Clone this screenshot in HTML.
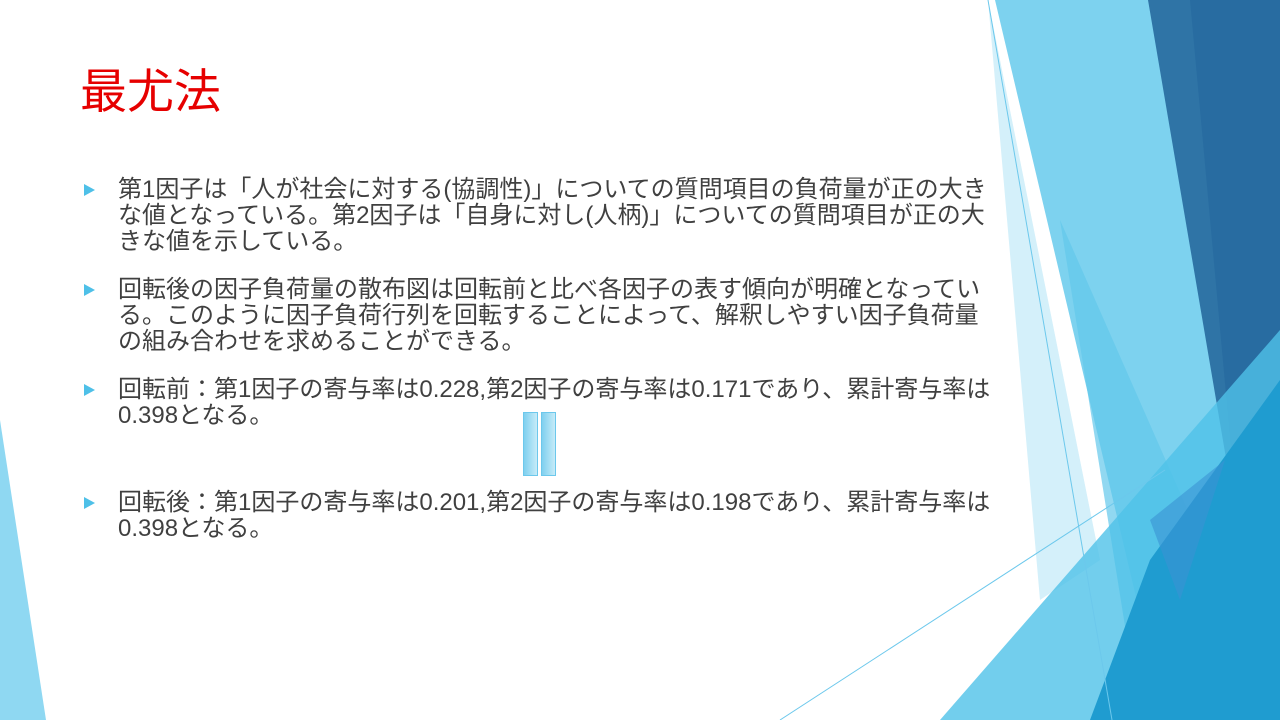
<!DOCTYPE html>
<html><head><meta charset="utf-8"><style>
html,body{margin:0;padding:0}
body{width:1280px;height:720px;position:relative;overflow:hidden;background:#fff;font-family:"Liberation Sans","Noto Sans CJK JP",sans-serif}
svg.bg{position:absolute;left:0;top:0}
h1{position:absolute;left:80px;top:64px;margin:0;font-weight:normal;font-size:47px;color:#e60000;line-height:56px}
.it{position:absolute;left:118px;font-size:24px;line-height:26px;color:#404040;white-space:nowrap}
.b{position:absolute;left:84px;width:0;height:0;border-left:11px solid #4ec0e8;border-top:6.5px solid transparent;border-bottom:6.5px solid transparent}
.bar{position:absolute;top:412px;width:13px;height:62px;background:linear-gradient(90deg,#7fd0ef,#c6ebf8);border:1px solid #6cc8ec}
</style></head><body>
<svg class="bg" width="1280" height="720">
<polygon points="0,420 0,720 46,720" fill="#8fd8f2"/>
<polygon points="995,0 1280,0 1280,720 1165,720" fill="#7dd2ef"/>
<polygon points="988,0 1100,560 1040,600" fill="#d4f0fa"/>
<polygon points="1060,220 1280,720 1140,720" fill="#62c8eb" opacity=".7"/>
<polygon points="1148,0 1280,0 1280,380 1228,470" fill="#2f74a6"/>
<polygon points="1190,0 1280,0 1280,380 1232,460" fill="#276aa0" opacity=".8"/>
<polygon points="940,720 1280,330 1280,720" fill="#4fc2e8" opacity=".8"/>
<polygon points="1150,560 1280,380 1280,720 1090,720" fill="#1f9cd0"/>
<polygon points="1150,520 1225,460 1180,600" fill="#3a92d4" opacity=".6"/>
<line x1="988" y1="0" x2="1112" y2="720" stroke="#6cc8ec" stroke-width="1"/>
<line x1="780" y1="720" x2="1165" y2="470" stroke="#6cc8ec" stroke-width="1"/>
</svg>
<h1>最尤法</h1>
<div class="b" style="top:184px"></div>
<div class="it" style="top:177px">第1因子は「人が社会に対する(協調性)」についての質問項目の負荷量が正の大き<br>な値となっている。第2因子は「自身に対し(人柄)」についての質問項目が正の大<br>きな値を示している。</div>
<div class="b" style="top:284px"></div>
<div class="it" style="top:277px">回転後の因子負荷量の散布図は回転前と比べ各因子の表す傾向が明確となってい<br>る。このように因子負荷行列を回転することによって、解釈しやすい因子負荷量<br>の組み合わせを求めることができる。</div>
<div class="b" style="top:384px"></div>
<div class="it" style="top:377px">回転前：第1因子の寄与率は0.228,第2因子の寄与率は0.171であり、累計寄与率は<br>0.398となる。</div>
<div class="bar" style="left:523px"></div><div class="bar" style="left:541px"></div>
<div class="b" style="top:497px"></div>
<div class="it" style="top:490px">回転後：第1因子の寄与率は0.201,第2因子の寄与率は0.198であり、累計寄与率は<br>0.398となる。</div>
</body></html>
